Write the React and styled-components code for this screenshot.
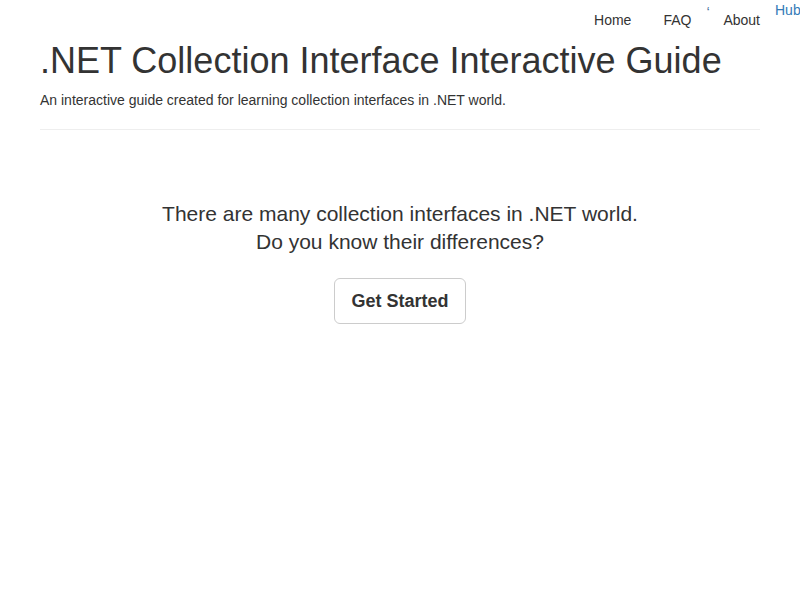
import React from 'react'
import styled, { createGlobalStyle } from 'styled-components'

const GlobalStyle = createGlobalStyle`
    html, body {
        margin: 0;
        padding: 0;
        background: #fff;
    }
    body {
        font-family: "Liberation Sans", Arial, Helvetica, sans-serif;
        font-size: 14px;
        line-height: 1.42857;
        color: #333;
        overflow: hidden;
    }
`

const navItems = ["Home", "FAQ", "About"]

function App() {
    return (
        <>
            <GlobalStyle />
            <Page>
                <TopBar>
                    <NavList>
                        {navItems.map((item, i) => (
                            <React.Fragment key={item}>
                                {i === 2 && <BrokenMark>‘</BrokenMark>}
                                <NavLink>{item}</NavLink>
                            </React.Fragment>
                        ))}
                    </NavList>
                    <HubLink>Hub</HubLink>
                </TopBar>
                <Container>
                    <Title>.NET Collection Interface Interactive Guide</Title>
                    <Subtitle>An interactive guide created for learning collection interfaces in .NET world.</Subtitle>
                    <Divider />
                    <Hero>
                        <Lead>
                            There are many collection interfaces in .NET world.<br />
                            Do you know their differences?
                        </Lead>
                        <StartButton>Get Started</StartButton>
                    </Hero>
                </Container>
            </Page>
        </>
    )
}

export default App

const Page = styled.div`
    width: 800px;
    height: 600px;
`

const TopBar = styled.div`
    display: flex;
    justify-content: flex-end;
    align-items: flex-start;
    height: 40px;
`

const NavList = styled.div`
    display: flex;
    align-items: flex-start;
    gap: 2px;
`

const NavLink = styled.a`
    display: block;
    padding: 10px 15px;
    line-height: 20px;
    font-size: 14px;
    color: #333;
    text-decoration: none;
`

const BrokenMark = styled.span`
    width: 0;
    margin-left: -2px;
    font-size: 15px;
    line-height: 15px;
    padding-top: 4px;
    color: #4a6f9a;
    overflow: visible;
    white-space: nowrap;
`

const HubLink = styled.a`
    display: block;
    width: 25px;
    font-size: 14px;
    line-height: 20px;
    color: #337ab7;
    text-decoration: none;
    overflow: hidden;
`

const Container = styled.div`
    width: 720px;
    margin: 0 auto;
`

const Title = styled.h1`
    margin: 1px 0 0;
    font-size: 36px;
    font-weight: 500;
    line-height: 40px;
    color: #333;
`

const Subtitle = styled.p`
    margin: 9px 0 0;
    font-size: 14px;
    line-height: 20px;
`

const Divider = styled.hr`
    margin: 19px 0 0;
    border: 0;
    border-top: 1px solid #eee;
`

const Hero = styled.div`
    display: flex;
    flex-direction: column;
    align-items: center;
    padding-top: 70px;
`

const Lead = styled.p`
    margin: 0;
    font-size: 21px;
    line-height: 28px;
    text-align: center;
`

const StartButton = styled.button`
    margin-top: 22px;
    padding: 10px 16px;
    font-family: inherit;
    font-size: 18px;
    font-weight: 700;
    line-height: 24px;
    color: #333;
    background: #fff;
    border: 1px solid #ccc;
    border-radius: 6px;
    cursor: pointer;
`
